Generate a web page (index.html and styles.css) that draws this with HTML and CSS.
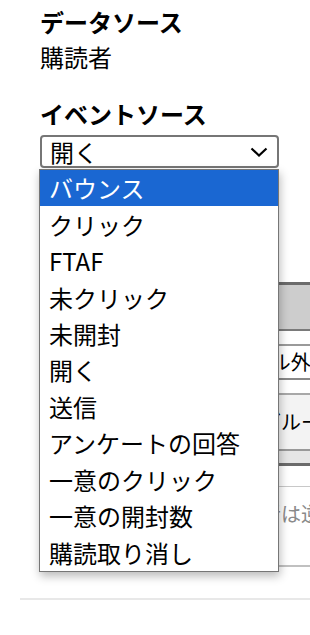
FILE: index.html
```html
<!DOCTYPE html>
<html lang="ja">
<head>
    <meta charset="UTF-8">
    <meta name="viewport" content="width=device-width, initial-scale=1.0">
    <title>イベントソース</title>
    <link rel="stylesheet" href="styles.css">
</head>
<body>
    <div class="page">
        <div class="field">
            <h2 class="field-label">データソース</h2>
            <div class="field-value">購読者</div>
        </div>

        <div class="field field-event">
            <h2 class="field-label">イベントソース</h2>
            <div class="select-wrap">
                <div class="select-box">
                    <span>開く</span>
                    <svg class="chevron" width="18" height="10" viewBox="0 0 18 10">
                        <polyline points="1.5,1.5 9,8.5 16.5,1.5" fill="none" stroke="#000" stroke-width="2.2"/>
                    </svg>
                </div>
                <ul class="select-list">
                    <li class="option selected">バウンス</li>
                    <li class="option">クリック</li>
                    <li class="option">FTAF</li>
                    <li class="option">未クリック</li>
                    <li class="option">未開封</li>
                    <li class="option">開く</li>
                    <li class="option">送信</li>
                    <li class="option">アンケートの回答</li>
                    <li class="option">一意のクリック</li>
                    <li class="option">一意の開封数</li>
                    <li class="option">購読取り消し</li>
                </ul>
            </div>
        </div>

        <!-- table behind the open dropdown -->
        <div class="filter-table">
            <div class="table-head"></div>
            <div class="table-row row-first">
                <span class="cell-text">チャネル外</span>
            </div>
            <div class="table-row row-group">
                <span class="cell-text">グループ</span>
            </div>
            <div class="table-row row-note">
                <span class="cell-text">購読者は逆順</span>
            </div>
        </div>

        <hr class="divider">
    </div>
</body>
</html>
```

FILE: styles.css
```css
body {
    margin: 0;
    font-family: "Noto Sans CJK JP", sans-serif;
    color: #000000;
    background-color: #ffffff;
}
.page {
    width: 310px;
    height: 635px;
    overflow: hidden;
    padding-left: 20px;
    box-sizing: border-box;
}
.field {
    margin-left: 20px;
}
.field-label {
    margin: 5px 0 0 0;
    font-size: 24px;
    font-weight: 700;
    line-height: 34px;
}
.field-value {
    margin-top: 1px;
    font-size: 24px;
    line-height: 34px;
}
.field-event .field-label {
    margin-top: 23px;
}
.select-wrap {
    position: relative;
    margin-top: 4px;
    width: 239px;
}
.select-box {
    height: 33px;
    box-sizing: border-box;
    border: 2px solid #767676;
    border-radius: 4px;
    padding: 0 8px 0 8px;
    display: flex;
    align-items: center;
    justify-content: space-between;
    font-size: 24px;
    line-height: 29px;
}
.chevron {
    margin-right: 1px;
}
.select-list {
    position: absolute;
    top: calc(100% + 1px);
    left: -1px;
    width: 240px;
    margin: 0;
    padding: 0;
    list-style: none;
    background-color: #ffffff;
    border: 1px solid #767676;
    box-sizing: border-box;
    box-shadow: 1px 4px 9px rgba(0, 0, 0, 0.28);
    z-index: 2;
}
.option {
    height: 36.45px;
    padding-left: 9px;
    display: flex;
    align-items: center;
    font-size: 24px;
    line-height: 30px;
    color: #000000;
}
.option.selected {
    background-color: #1a67d2;
    color: #ffffff;
}
.filter-table {
    margin: 114px 0 0 20px;
    width: 400px;
}
.table-head {
    height: 44px;
    background-color: #cdcdcd;
    border-top: 3px solid #6b6b6b;
    border-bottom: 2px solid #7a7a7a;
}
.table-row {
    font-size: 20px;
    line-height: 26px;
}
.row-first {
    margin-top: 13px;
    height: 32px;
    padding-left: 171px;
    border-top: 2px solid #9a9a9a;
    border-bottom: 2px solid #888888;
    display: flex;
    align-items: center;
}
.row-group {
    margin-top: 13px;
    height: 54px;
    padding-left: 221px;
    background-color: #f3f3f3;
    border-top: 2px solid #a8a8a8;
    border-bottom: 2px solid #999999;
    display: flex;
    align-items: center;
    box-shadow: 0 12px 0 #e6e6e6, 0 15px 0 #6b6b6b;
}
.row-note {
    margin-top: 35px;
    height: 78px;
    box-sizing: content-box;
    padding-left: 181px;
    border-top: 1px solid #c8c8c8;
    border-bottom: 2px solid #c0c0c0;
    color: #8a8a8a;
}
.row-note .cell-text {
    display: block;
    padding-top: 14px;
}
.cell-text {
    white-space: nowrap;
}
.divider {
    margin: 31px 0 0 0;
    border: none;
    border-top: 2px solid #e8e8e8;
}
```
